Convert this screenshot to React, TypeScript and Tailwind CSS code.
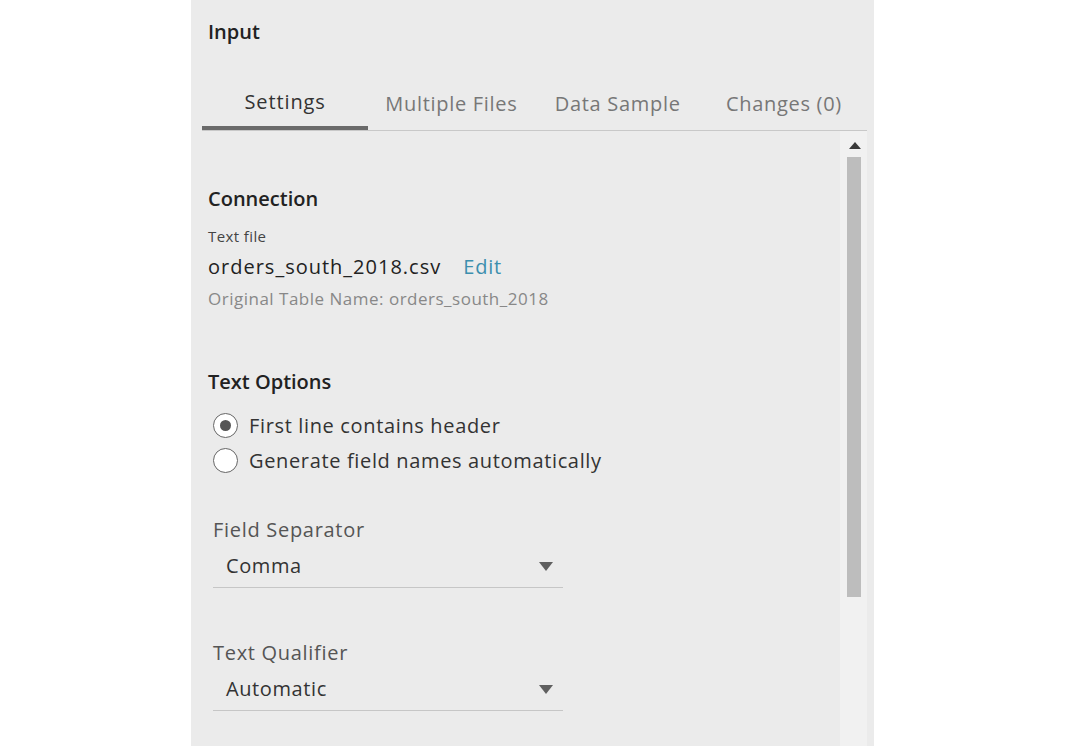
import React from "react";

const tabs = ["Settings", "Multiple Files", "Data Sample", "Changes (0)"];

function Radio({ checked, label }: { checked?: boolean; label: string }) {
  return (
    <label className="flex h-[35px] items-center gap-[11px] pl-[5px]">
      <span className="flex h-[25px] w-[25px] items-center justify-center rounded-full border-[1.5px] border-[#666] bg-white">
        {checked && <span className="h-[11px] w-[11px] rounded-full bg-[#555]" />}
      </span>
      <span className="text-[20px] tracking-[0.65px] text-[#333]">{label}</span>
    </label>
  );
}

function Dropdown({ label, value }: { label: string; value: string }) {
  return (
    <div className="pl-[5px]">
      <div className="text-[20px] leading-[28px] tracking-[0.7px] text-[#555]">{label}</div>
      <div className="mt-[4px] flex h-[40px] w-[350px] items-start justify-between border-b border-[#c6c6c6] pl-[13px] pr-[10px] pt-[4px]">
        <span className="text-[20px] leading-[28px] tracking-[0.6px] text-[#333]">{value}</span>
        <svg width="14" height="9" viewBox="0 0 14 9" className="mt-[10px]">
          <path d="M0 0 H14 L7 9 Z" fill="#5f5f5f" />
        </svg>
      </div>
    </div>
  );
}

export default function App() {
  return (
    <div
      className="flex h-[746px] w-full bg-white"
      style={{ fontFamily: '"Open Sans", "Noto Sans", sans-serif' }}
    >
      <div className="ml-[191px] flex h-full w-[683px] flex-col bg-[#ebebeb] pl-[11px] pr-[7px]">
        <div className="pl-[6px] pt-[19px] text-[20px] font-semibold leading-[26px] text-[#222]">
          Input
        </div>
        <div className="mt-[41px] grid grid-cols-4 border-b border-[#c8c8c8]">
          {tabs.map((t, i) => (
            <div
              key={t}
              className={
                i === 0
                  ? "flex h-[44px] items-start justify-center border-b-4 border-[#6a6a6a] pt-[3px] text-[20px] leading-[26px] tracking-[0.9px] text-[#333]"
                  : "flex h-[44px] items-start justify-center pt-[5px] text-[20px] leading-[26px] tracking-[0.7px] text-[#777]"
              }
            >
              {t}
            </div>
          ))}
        </div>
        <div className="flex min-h-0 flex-1">
          <div className="flex-1 pl-[6px]">
            <div className="mt-[55px] text-[20px] font-semibold leading-[26px] text-[#222]">
              Connection
            </div>
            <div className="mt-[14px] text-[15px] leading-[20px] tracking-[0.4px] text-[#444]">Text file</div>
            <div className="mt-[8px] flex items-center gap-[22px] text-[20px] leading-[26px]">
              <span className="tracking-[1px] text-[#222]">orders_south_2018.csv</span>
              <span className="tracking-[0.8px] text-[#3c8fae]">Edit</span>
            </div>
            <div className="mt-[8px] text-[17px] leading-[22px] tracking-[0.5px] text-[#888]">
              Original Table Name: orders_south_2018
            </div>
            <div className="mt-[59px] text-[20px] font-semibold leading-[26px] text-[#222]">
              Text Options
            </div>
            <div className="mt-[13px]">
              <Radio checked label="First line contains header" />
              <Radio label="Generate field names automatically" />
            </div>
            <div className="mt-[38px]">
              <Dropdown label="Field Separator" value="Comma" />
            </div>
            <div className="mt-[51px]">
              <Dropdown label="Text Qualifier" value="Automatic" />
            </div>
          </div>
          <div className="flex w-[27px] flex-col items-center bg-[#f1f1f1]">
            <svg width="12" height="7" viewBox="0 0 12 7" className="ml-[2px] mt-[11px]">
              <path d="M0 7 L6 0 L12 7 Z" fill="#3a3a3a" />
            </svg>
            <div className="ml-[1px] mt-[8px] h-[440px] w-[14px] bg-[#bdbdbd]" />
          </div>
        </div>
      </div>
    </div>
  );
}
